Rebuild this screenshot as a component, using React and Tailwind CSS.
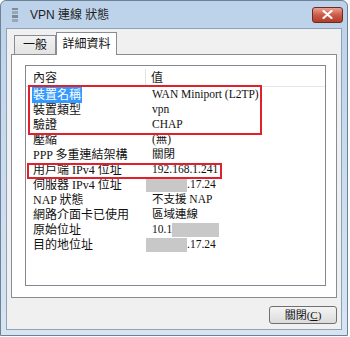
import React from "react";

const rows = [
  { label: "裝置名稱", value: "WAN Miniport (L2TP)", selected: true },
  { label: "裝置類型", value: "vpn" },
  { label: "驗證", value: "CHAP" },
  { label: "壓縮", value: "(無)" },
  { label: "PPP 多重連結架構", value: "關閉" },
  { label: "用戶端 IPv4 位址", value: "192.168.1.241" },
  { label: "伺服器 IPv4 位址", pre: true, value: ".17.24" },
  { label: "NAP 狀態", value: "不支援 NAP" },
  { label: "網路介面卡已使用", value: "區域連線" },
  { label: "原始位址", value: "10.1", post: true },
  { label: "目的地位址", pre: true, value: ".17.24" },
];

const font = { fontFamily: '"Liberation Serif", "Noto Sans CJK TC", serif' };

const Block = ({ w }) => (
  <span className={`inline-block h-[14px] bg-[#c8c8c8] ${w}`} />
);

const App = () => {
  return (
    <div className="w-[350px] h-[337px] bg-white">
      <div className="w-[348px] h-[336px] border border-[#6f8194] rounded-t-[6px] bg-gradient-to-b from-[#bcd2ea] to-[#d7e5f3] flex flex-col px-[5px] pb-[5px]">
        {/* title bar */}
        <div className="h-[27px] flex items-center shrink-0">
          <div className="ml-[6px] w-[6px] h-[14px] flex flex-col gap-[1px]">
            <div className="h-[3px] bg-[#7d8a97]" />
            <div className="h-[3px] bg-[#9aa6b2]" />
            <div className="h-[3px] bg-[#7d8a97]" />
            <div className="h-[3px] bg-[#9aa6b2]" />
          </div>
          <span className="ml-[12px] text-[12px] text-[#1e1e1e]" style={{ fontFamily: '"Liberation Sans", "Noto Sans CJK TC", sans-serif' }}>
            VPN 連線 狀態
          </span>
          <div className="ml-auto mr-[-1px] w-[31px] h-[16px] rounded-[3px] border border-[#6b2a22] bg-gradient-to-b from-[#e8a193] via-[#cc5a45] to-[#b13c2b] flex items-center justify-center">
            <svg width="11" height="9" viewBox="0 0 11 9">
              <path d="M1.5 1 L9.5 8 M9.5 1 L1.5 8" stroke="#fff" strokeWidth="2.2" strokeLinecap="round" />
            </svg>
          </div>
        </div>

        {/* client area */}
        <div className="flex-1 bg-[#f0f0f0] border border-[#8ea2b6] flex flex-col px-[4px]">
          {/* tabs */}
          <div className="flex items-end h-[25px] pl-[3px]">
            <div className="h-[19px] w-[42px] border border-b-0 border-[#898c95] bg-gradient-to-b from-[#f2f2f2] to-[#e3e3e3] flex items-center justify-center text-[12px] text-[#111]" style={font}>
              一般
            </div>
            <div className="h-[23px] w-[61px] -mb-[1px] border border-b-0 border-[#898c95] bg-white flex items-center justify-center text-[12px] text-[#111] relative z-10" style={font}>
              詳細資料
            </div>
          </div>

          {/* tab panel */}
          <div className="h-[244px] border border-[#898c95] bg-white pl-[13px] pr-[10px] pt-[10px] pb-[11px]">
            <div className="relative h-full border border-[#828790] bg-white" style={font}>
              {/* header */}
              <div className="flex h-[18px] mt-[3px] text-[12px] text-[#1a1a1a] border-b border-[#e6e6e6]">
                <div className="w-[120px] pl-[7px] border-r border-[#e2e2e2] leading-[18px]">內容</div>
                <div className="flex-1 pl-[5px] leading-[18px]">值</div>
              </div>
              {/* rows */}
              <div className="flex flex-col">
                {rows.map((r) => (
                  <div key={r.label} className="flex h-[15px] items-center text-[12px] text-[#111]">
                    <div className="w-[120px] pl-[6px]">
                      <span className={r.selected ? "bg-[#3399ff] text-white px-[1px] py-[1px]" : "px-[1px]"}>{r.label}</span>
                    </div>
                    <div className="flex-1 flex items-center whitespace-nowrap text-[11.5px]">
                      {r.pre && <Block w="w-[41px]" />}
                      <span className={r.pre ? "" : "pl-[6px]"}>{r.value}</span>
                      {r.post && <Block w="w-[47px]" />}
                    </div>
                  </div>
                ))}
              </div>

              {/* red highlight frames */}
              <div className="absolute left-[2px] top-[19px] w-[234px] h-[50px] border-2 border-[#e0202a]" />
              <div className="absolute left-[1px] top-[97px] w-[195px] h-[16px] border-2 border-[#e0202a]" />
            </div>
          </div>

          {/* footer */}
          <div className="flex justify-end mt-[8px]">
            <button className="w-[68px] h-[18px] rounded-[3px] border border-[#707070] bg-gradient-to-b from-[#f4f4f4] to-[#dcdcdc] text-[11px] text-[#111] flex items-center justify-center" style={font}>
              關閉(<span className="underline">C</span>)
            </button>
          </div>
        </div>
      </div>
    </div>
  );
};

export default App;
